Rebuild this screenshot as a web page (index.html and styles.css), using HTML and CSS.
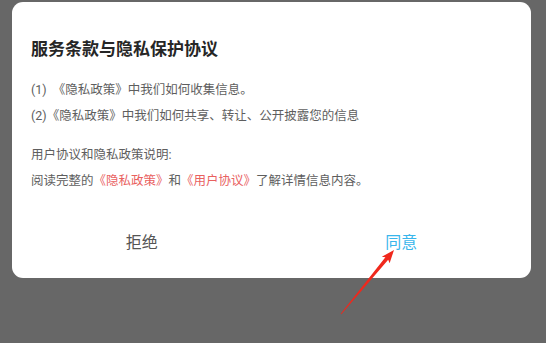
FILE: index.html
```html
<!DOCTYPE html>
<html lang="zh-CN">
<head>
<meta charset="utf-8">
<link rel="stylesheet" href="styles.css">
</head>
<body>
<div class="dialog">
  <div class="content">
    <h1 class="title">服务条款与隐私保护协议</h1>
    <div class="group">
      <p class="line">(1)&nbsp;&nbsp;《隐私政策》中我们如何收集信息。</p>
      <p class="line">(2)《隐私政策》中我们如何共享、转让、公开披露您的信息</p>
    </div>
    <div class="group">
      <p class="line">用户协议和隐私政策说明:</p>
      <p class="line">阅读完整的<span class="link">《隐私政策》</span>和<span class="link">《用户协议》</span>了解详情信息内容。</p>
    </div>
  </div>
  <div class="actions">
    <button class="btn reject">拒绝</button>
    <button class="btn agree">同意</button>
  </div>
</div>
<svg class="arrow" width="546" height="343" viewBox="0 0 546 343">
  <polygon fill="#f0281c" points="394,250 389.6,263.2 388.2,259.8 341.3,314.3 340.7,313.7 385.4,257.2 381.8,256.8"/>
</svg>
</body>
</html>
```
FILE: styles.css
```css
html, body {
  margin: 0;
  padding: 0;
}
body {
  width: 546px;
  height: 343px;
  background: #676767;
  overflow: hidden;
  position: relative;
  font-family: Roboto, "Noto Sans CJK SC", sans-serif;
}
.dialog {
  margin: 2px 0 0 12px;
  width: 519px;
  height: 276px;
  background: #ffffff;
  border-radius: 11px;
  display: flex;
  flex-direction: column;
}
.content {
  padding: 35px 19px 0 19px;
}
.title {
  margin: 0;
  font-size: 17px;
  line-height: 24px;
  font-weight: 700;
  color: #262626;
}
.group {
  margin-top: 16px;
}
.group + .group {
  margin-top: 13px;
}
.line {
  margin: 0;
  font-size: 12.5px;
  line-height: 26px;
  color: #5e5e5e;
  white-space: nowrap;
}
.link {
  color: #e9615f;
}
.actions {
  margin-top: 25px;
  display: flex;
  height: 48px;
}
.btn {
  flex: 1;
  border: none;
  background: transparent;
  padding: 0;
  font-family: Roboto, "Noto Sans CJK SC", sans-serif;
  font-size: 16px;
  line-height: 48px;
}
.reject {
  color: #555555;
}
.agree {
  color: #38b6ec;
}
.arrow {
  position: absolute;
  left: 0;
  top: 0;
}
```
